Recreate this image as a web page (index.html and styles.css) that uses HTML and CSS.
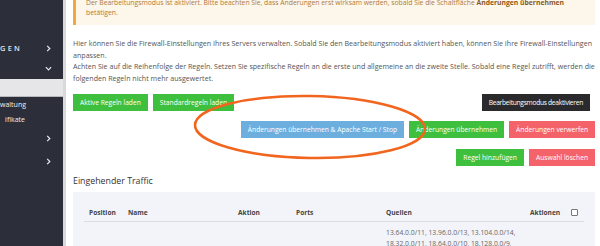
FILE: index.html
```html
<!DOCTYPE html>
<html lang="de">
<head>
<meta charset="utf-8">
<title>Firewall</title>
<link rel="stylesheet" href="styles.css">
</head>
<body>
<aside class="sidebar">
  <div class="nav-item nav-first">
    <span class="nav-label caps">GEN</span>
    <svg class="chev" viewBox="0 0 8 8"><path d="M2.5 1 L5.5 4 L2.5 7" /></svg>
  </div>
  <div class="nav-item nav-second">
    <span class="nav-label"></span>
    <svg class="chev" viewBox="0 0 8 8"><path d="M1 2.5 L4 5.5 L7 2.5" /></svg>
  </div>
  <div class="nav-active"></div>
  <div class="nav-sub"><span class="nav-label">waltung</span></div>
  <div class="nav-sub nav-sub-last"><span class="nav-label">ifikate</span></div>
  <div class="nav-item nav-lower">
    <span class="nav-label"></span>
    <svg class="chev" viewBox="0 0 8 8"><path d="M2.5 1 L5.5 4 L2.5 7" /></svg>
  </div>
  <div class="nav-item nav-lower">
    <span class="nav-label"></span>
    <svg class="chev" viewBox="0 0 8 8"><path d="M2.5 1 L5.5 4 L2.5 7" /></svg>
  </div>
</aside>
<main class="main">
  <div class="alert">Der Bearbeitungsmodus ist aktiviert. Bitte beachten Sie, dass Änderungen erst wirksam werden, sobald Sie die Schaltfläche <b>Änderungen übernehmen</b><br>betätigen.</div>
  <p class="intro">Hier können Sie die Firewall-Einstellungen Ihres Servers verwalten. Sobald Sie den Bearbeitungsmodus aktiviert haben, können Sie Ihre Firewall-Einstellungen<br>anpassen.<br>Achten Sie auf die Reihenfolge der Regeln. Setzen Sie spezifische Regeln an die erste und allgemeine an die zweite Stelle. Sobald eine Regel zutrifft, werden die<br>folgenden Regeln nicht mehr ausgewertet.</p>
  <div class="btn-row row-top">
    <div class="btn-group">
      <button class="btn green">Aktive Regeln laden</button>
      <button class="btn green">Standardregeln laden</button>
    </div>
    <button class="btn dark">Bearbeitungsmodus deaktivieren</button>
  </div>
  <div class="btn-row row-right">
    <button class="btn blue">Änderungen übernehmen &amp; Apache Start / Stop</button>
    <button class="btn green">Änderungen übernehmen</button>
    <button class="btn red">Änderungen verwerfen</button>
  </div>
  <div class="btn-row row-right row-third">
    <button class="btn green">Regel hinzufügen</button>
    <button class="btn red">Auswahl löschen</button>
  </div>
  <h2 class="section-title">Eingehender Traffic</h2>
  <div class="card">
    <table class="rules">
      <colgroup>
        <col class="c-pos"><col class="c-name"><col class="c-act"><col class="c-ports"><col class="c-src"><col>
      </colgroup>
      <thead>
        <tr>
          <th>Position</th><th>Name</th><th>Aktion</th><th>Ports</th><th>Quellen</th>
          <th><span class="th-actions">Aktionen <span class="checkbox"></span></span></th>
        </tr>
      </thead>
      <tbody>
        <tr>
          <td></td><td></td><td></td><td></td>
          <td class="src">13.64.0.0/11, 13.96.0.0/13, 13.104.0.0/14,<br>18.32.0.0/11, 18.64.0.0/10, 18.128.0.0/9,</td>
          <td></td>
        </tr>
      </tbody>
    </table>
  </div>
</main>
<svg class="mark" width="600" height="246" viewBox="0 0 600 246">
  <ellipse cx="310" cy="127" rx="115" ry="31" transform="rotate(1 310 127)" />
</svg>
</body>
</html>
```
FILE: styles.css
```css
html, body {
  margin: 0;
  padding: 0;
}
body {
  position: relative;
  width: 600px;
  height: 246px;
  overflow: hidden;
  display: flex;
  font-family: "Open Sans", "Noto Sans", sans-serif;
  background: #ffffff;
  color: #555;
}
.sidebar {
  width: 63px;
  flex: none;
  background: #2c2f3a;
  border-right: 3px solid #d9d9dc;
  padding-top: 38px;
  display: flex;
  flex-direction: column;
}
.nav-item {
  height: 20px;
  display: flex;
  align-items: center;
  justify-content: space-between;
  padding-right: 11px;
}
.nav-second {
  margin-bottom: 1px;
}
.nav-lower {
  height: 23px;
}
.nav-label {
  width: 26px;
  display: flex;
  justify-content: flex-end;
  white-space: nowrap;
  color: #e4e4e8;
  font-size: 7px;
}
.nav-label.caps {
  font-size: 7.4px;
  font-weight: 600;
  letter-spacing: 2.3px;
  justify-content: flex-start;
  padding-left: 0;
}
.chev {
  width: 7px;
  height: 7px;
  fill: none;
  stroke: #e8e8ec;
  stroke-width: 1.4;
}
.nav-active {
  height: 17px;
  background: #e6e6e8;
  border-bottom: 1px solid #b9b9bd;
}
.nav-sub {
  height: 15px;
  display: flex;
  align-items: center;
}
.nav-sub .nav-label {
  color: #f0f0f2;
  width: 26px;
}
.nav-sub-last .nav-label {
  width: 25px;
}
.main {
  flex: 1;
  padding: 0 5px 0 7px;
  min-width: 0;
}
.alert {
  margin-top: -7px;
  padding: 5px 10px 7px 10px;
  background: #fdf6ea;
  border-left: 3px solid #f5a83a;
  color: #b07a3a;
  font-size: 6.8px;
  line-height: 10px;
  white-space: nowrap;
}
.alert b {
  color: #8a5a1e;
  font-weight: 700;
}
.intro {
  margin: 13px 0 0 0;
  font-size: 7.1px;
  line-height: 11.7px;
  color: #555;
  white-space: nowrap;
}
.btn-row {
  display: flex;
  gap: 5px;
}
.row-top {
  justify-content: space-between;
  margin-top: 9px;
}
.row-top .dark {
  margin-right: 5px;
  letter-spacing: -0.3px;
}
.row-right {
  justify-content: flex-end;
  margin-top: 10px;
}
.row-third {
  margin-top: 11px;
}
.btn-group {
  display: flex;
  gap: 5px;
}
.btn {
  height: 17px;
  padding: 0 7px;
  border: 0;
  border-radius: 0;
  font-family: "Open Sans", "Noto Sans", sans-serif;
  font-size: 6.7px;
  color: #ffffff;
  white-space: nowrap;
  cursor: pointer;
}
.green { background: #3ebf3e; }
.blue { background: #6cafdf; }
.red { background: #f4636a; }
.dark { background: #2a2a2c; }
.section-title {
  margin: 9px 0 0 0;
  font-size: 8.8px;
  font-weight: 400;
  color: #333;
  line-height: 12px;
}
.card {
  margin-top: 5px;
  background: #f3f4f9;
  padding: 12px 11px 0 11px;
  height: 60px;
}
.rules {
  width: 100%;
  border-collapse: collapse;
  table-layout: fixed;
  font-size: 6.6px;
}
.c-pos { width: 39px; }
.c-name { width: 110px; }
.c-act { width: 58px; }
.c-ports { width: 90px; }
.c-src { width: 144px; }
.rules th {
  text-align: left;
  font-weight: 700;
  color: #444;
  padding: 4px 0 4px 5px;
  line-height: 9px;
  border-bottom: 1px solid #dcdde3;
}
.th-actions {
  display: flex;
  align-items: center;
  gap: 11px;
}
.checkbox {
  width: 5px;
  height: 5px;
  border: 1px solid #777;
  border-radius: 1px;
  background: #fff;
}
.rules td {
  padding: 5px 0 0 5px;
  vertical-align: top;
  line-height: 11px;
  color: #666;
  font-size: 6.8px;
}
.mark {
  position: absolute;
  left: 0;
  top: 0;
  pointer-events: none;
}
.mark ellipse {
  fill: none;
  stroke: #f2651e;
  stroke-width: 2.6;
}
```
